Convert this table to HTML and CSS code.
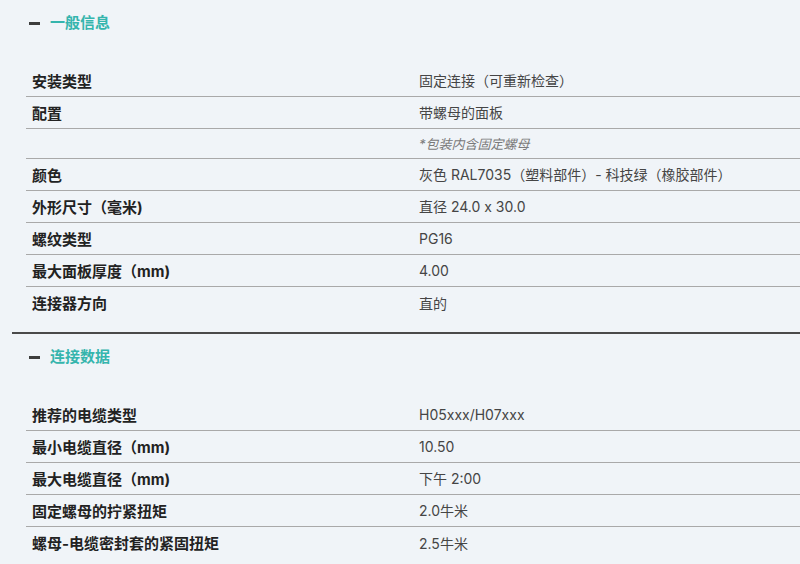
FILE: index.html
```html
<!DOCTYPE html>
<html lang="zh-CN">
<head>
<meta charset="utf-8">
<link rel="stylesheet" href="styles.css">
</head>
<body>
<div class="page">
  <section class="section">
    <div class="section-head"><span class="minus"></span><h2 class="title">一般信息</h2></div>
    <div class="table">
      <div class="row"><div class="label">安装类型</div><div class="value">固定连接（可重新检查）</div></div>
      <div class="row"><div class="label">配置</div><div class="value">带螺母的面板</div></div>
      <div class="row note"><div class="label"></div><div class="value">*包装内含固定螺母</div></div>
      <div class="row"><div class="label">颜色</div><div class="value">灰色 RAL7035（塑料部件）- 科技绿（橡胶部件）</div></div>
      <div class="row"><div class="label">外形尺寸（毫米)</div><div class="value">直径 24.0 x 30.0</div></div>
      <div class="row"><div class="label">螺纹类型</div><div class="value">PG16</div></div>
      <div class="row"><div class="label">最大面板厚度（mm)</div><div class="value">4.00</div></div>
      <div class="row"><div class="label">连接器方向</div><div class="value">直的</div></div>
    </div>
  </section>
  <section class="section">
    <div class="section-head"><span class="minus"></span><h2 class="title">连接数据</h2></div>
    <div class="table">
      <div class="row"><div class="label">推荐的电缆类型</div><div class="value">H05xxx/H07xxx</div></div>
      <div class="row"><div class="label">最小电缆直径（mm)</div><div class="value">10.50</div></div>
      <div class="row"><div class="label">最大电缆直径（mm)</div><div class="value">下午 2:00</div></div>
      <div class="row"><div class="label">固定螺母的拧紧扭矩</div><div class="value">2.0牛米</div></div>
      <div class="row"><div class="label">螺母-电缆密封套的紧固扭矩</div><div class="value">2.5牛米</div></div>
    </div>
  </section>
</div>
</body>
</html>
```
FILE: styles.css
```css
html, body {
  margin: 0;
  padding: 0;
  background: #f0f4f8;
}
body {
  font-family: Inter, "Noto Sans CJK SC", sans-serif;
  color: #222;
  overflow: hidden;
}
.page {
  padding-left: 12px;
}
.section {
  padding: 12px 0 13px 0;
  border-bottom: 2px solid #4a4a4a;
}
.section-head {
  display: flex;
  align-items: center;
  gap: 10px;
  height: 22px;
  padding-left: 17px;
  margin-bottom: 31px;
}
.minus {
  display: block;
  width: 11px;
  height: 3px;
  background: #3d3d3d;
}
.title {
  margin: 0;
  font-size: 15px;
  font-weight: 700;
  color: #35b5ad;
  line-height: 22px;
}
.table {
  margin-left: 14px;
}
.row {
  display: grid;
  grid-template-columns: 393px 1fr;
  align-items: center;
  height: 31px;
  border-bottom: 1px solid #a9a9a9;
}
.row:last-child {
  border-bottom: none;
  height: 32px;
}
.row.note {
  height: 29px;
}
.label {
  padding-left: 6px;
  padding-bottom: 1px;
  font-size: 15px;
  font-weight: 700;
  color: #222;
}
.value {
  padding-bottom: 1px;
  font-size: 14px;
  color: #454545;
}
.note .value {
  font-size: 13px;
  font-style: italic;
  color: #7a7a7a;
}
```
